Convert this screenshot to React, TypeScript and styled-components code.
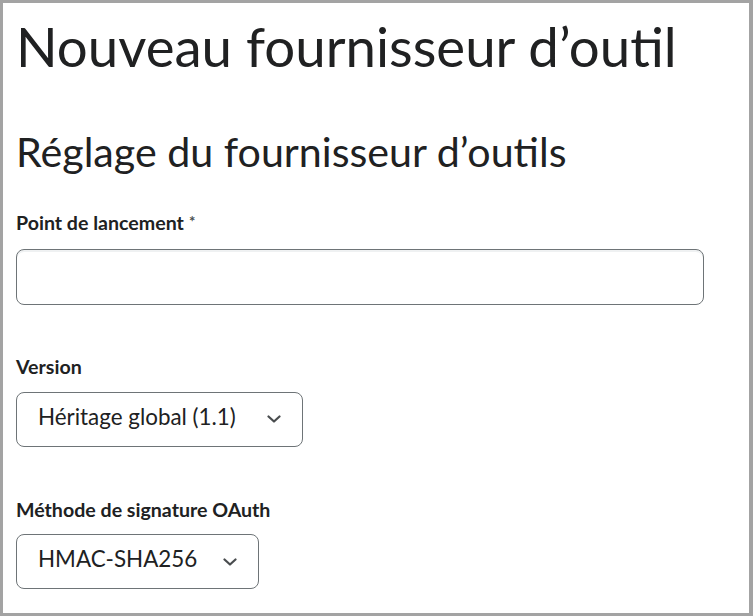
import React from "react";
import styled, { createGlobalStyle } from "styled-components";

const Global = createGlobalStyle`
  html, body { margin: 0; padding: 0; background: #ffffff; }
  * { box-sizing: border-box; }
  body { font-family: Lato, "Open Sans", sans-serif; color: #202122; }
`;

const Frame = styled.div`
  width: 753px;
  height: 616px;
  border-style: solid;
  border-color: #a3a3a3;
  border-width: 3px 4px 3px 3px;
  padding: 11px 13px 0 13px;
  display: flex;
  flex-direction: column;
  align-items: flex-start;
  overflow: hidden;
`;

const Title = styled.h1`
  margin: 0;
  font-size: 54.6px;
  font-weight: 400;
  line-height: 1.2;
  color: #202122;
`;

const Subtitle = styled.h2`
  margin: 47.7px 0 0 0;
  font-size: 41.2px;
  font-weight: 400;
  line-height: 1.2;
  color: #202122;
`;

const Field = styled.div<{ $gap: number }>`
  margin-top: ${(p) => p.$gap}px;
  display: flex;
  flex-direction: column;
  align-items: flex-start;
  align-self: stretch;
`;

const Label = styled.label<{ $space: number }>`
  font-size: 19.6px;
  font-weight: 700;
  line-height: 1.2;
  color: #202122;
  margin-bottom: ${(p) => p.$space}px;
`;

const Required = styled.span`
  color: #494c4e;
  font-size: 15px;
  vertical-align: top;
  margin-left: 5px;
  position: relative;
  top: 1px;
`;

const TextInput = styled.input`
  width: 688px;
  height: 56px;
  border: 1px solid #6e7477;
  border-radius: 8px;
  box-shadow: inset 0 2px 0 0 rgba(177, 185, 190, 0.2);
  font-family: Lato, sans-serif;
  font-size: 22.4px;
  padding: 0 21px;
  outline: none;
  background: #fff;
`;

const Select = styled.div<{ $gap: number }>`
  display: inline-flex;
  align-items: center;
  height: 55px;
  border: 1px solid #6e7477;
  border-radius: 8px;
  padding: 0 21px;
  font-size: 22.4px;
  color: #202122;
  background: #fff;
  gap: ${(p) => p.$gap}px;
`;

const SelectText = styled.span`
  line-height: 1;
  position: relative;
  top: -2px;
`;

const Chevron = styled.svg`
  width: 14px;
  height: 8px;
  display: block;
  flex: none;
`;

const ChevronIcon = () => (
  <Chevron viewBox="0 0 14 8">
    <polyline
      points="1.5,1.5 7,6.5 12.5,1.5"
      fill="none"
      stroke="#494c4e"
      strokeWidth="2.2"
      strokeLinecap="round"
      strokeLinejoin="round"
    />
  </Chevron>
);

export default function App() {
  return (
    <>
      <Global />
      <Frame>
        <Title>Nouveau fournisseur d’outil</Title>
        <Subtitle>Réglage du fournisseur d’outils</Subtitle>
        <Field $gap={34}>
          <Label $space={15}>
            Point de lancement<Required>*</Required>
          </Label>
          <TextInput type="text" />
        </Field>
        <Field $gap={50}>
          <Label $space={13}>Version</Label>
          <Select $gap={31}>
            <SelectText>Héritage global (1.1)</SelectText>
            <ChevronIcon />
          </Select>
        </Field>
        <Field $gap={51}>
          <Label $space={13}>Méthode de signature OAuth</Label>
          <Select $gap={26}>
            <SelectText>HMAC-SHA256</SelectText>
            <ChevronIcon />
          </Select>
        </Field>
      </Frame>
    </>
  );
}
